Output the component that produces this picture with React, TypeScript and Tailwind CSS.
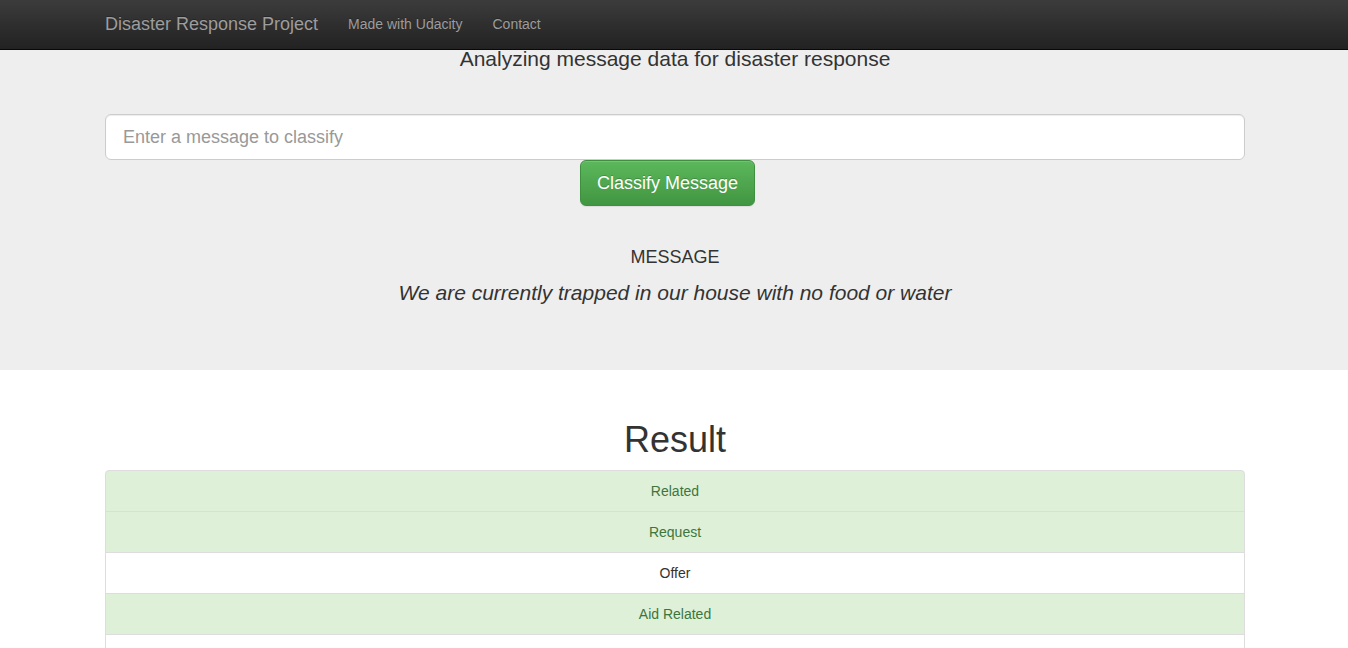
const categories = [
  { name: "Related", hit: true },
  { name: "Request", hit: true },
  { name: "Offer", hit: false },
  { name: "Aid Related", hit: true },
  { name: "Medical Help", hit: false },
  { name: "Medical Products", hit: false },
];

export default function App() {
  return (
    <div className="w-screen overflow-hidden">
      <div className="min-h-[648px] w-[1350px] bg-white font-['Liberation_Sans',Arial,sans-serif] text-[14px] text-[#333]">
        {/* Inverse navbar */}
        <nav className="h-[50px] border-b border-[#080808] bg-gradient-to-b from-[#3c3c3c] to-[#222]">
          <div className="mx-auto flex w-[1170px] px-[15px]">
            <a className="-ml-[15px] px-[15px] pt-[14px] pb-[16px] text-[18px] leading-[20px] text-[#9d9d9d] [text-shadow:0_-1px_0_rgba(0,0,0,0.25)]">
              Disaster Response Project
            </a>
            <a className="px-[15px] pt-[14px] pb-[16px] leading-[20px] text-[#9d9d9d] [text-shadow:0_-1px_0_rgba(0,0,0,0.25)]">
              Made with Udacity
            </a>
            <a className="px-[15px] pt-[14px] pb-[16px] leading-[20px] text-[#9d9d9d] [text-shadow:0_-1px_0_rgba(0,0,0,0.25)]">
              Contact
            </a>
          </div>
        </nav>

        {/* Jumbotron */}
        <section className="h-[320px] bg-[#eee]">
          <div className="mx-auto w-[1170px] px-[15px] text-center">
            <p className="text-[21px] leading-[18px]">Analyzing message data for disaster response</p>

            <div className="mt-[46px] text-left">
              <input
                className="block h-[46px] w-full rounded-[6px] border border-[#ccc] bg-white px-[17px] text-[18px] text-[#555] shadow-[inset_0_1px_1px_rgba(0,0,0,0.075)] outline-none placeholder:text-[#999]"
                placeholder="Enter a message to classify"
              />
              <button className="ml-[475px] h-[46px] w-[175px] rounded-[6px] border border-[#3e8f3e] bg-gradient-to-b from-[#5cb85c] to-[#419641] text-[18px] text-white shadow-[inset_0_1px_0_rgba(255,255,255,0.15),0_1px_1px_rgba(0,0,0,0.075)] [text-shadow:0_-1px_0_rgba(0,0,0,0.2)]">
                Classify Message
              </button>
            </div>

            <h4 className="mt-[41px] text-[18px] leading-[20px]">MESSAGE</h4>
            <p className="mt-[14px] text-[21px] italic leading-[24px]">
              We are currently trapped in our house with no food or water
            </p>
          </div>
        </section>

        {/* Result */}
        <section className="mx-auto w-[1170px] px-[15px]">
          <h1 className="mt-[50px] text-center text-[36px] leading-[40px]">Result</h1>
          <ul className="mt-[10px]">
            {categories.map((c, i) => (
              <li
                key={c.name}
                className={`-mb-px border border-[#ddd] px-[15px] py-[10px] text-center leading-[20px] ${
                  i === 0 ? "rounded-t-[4px]" : ""
                } ${c.hit ? "bg-[#dff0d8] text-[#3c763d]" : "bg-white text-[#333]"}`}
              >
                {c.name}
              </li>
            ))}
          </ul>
        </section>
      </div>
    </div>
  );
}
